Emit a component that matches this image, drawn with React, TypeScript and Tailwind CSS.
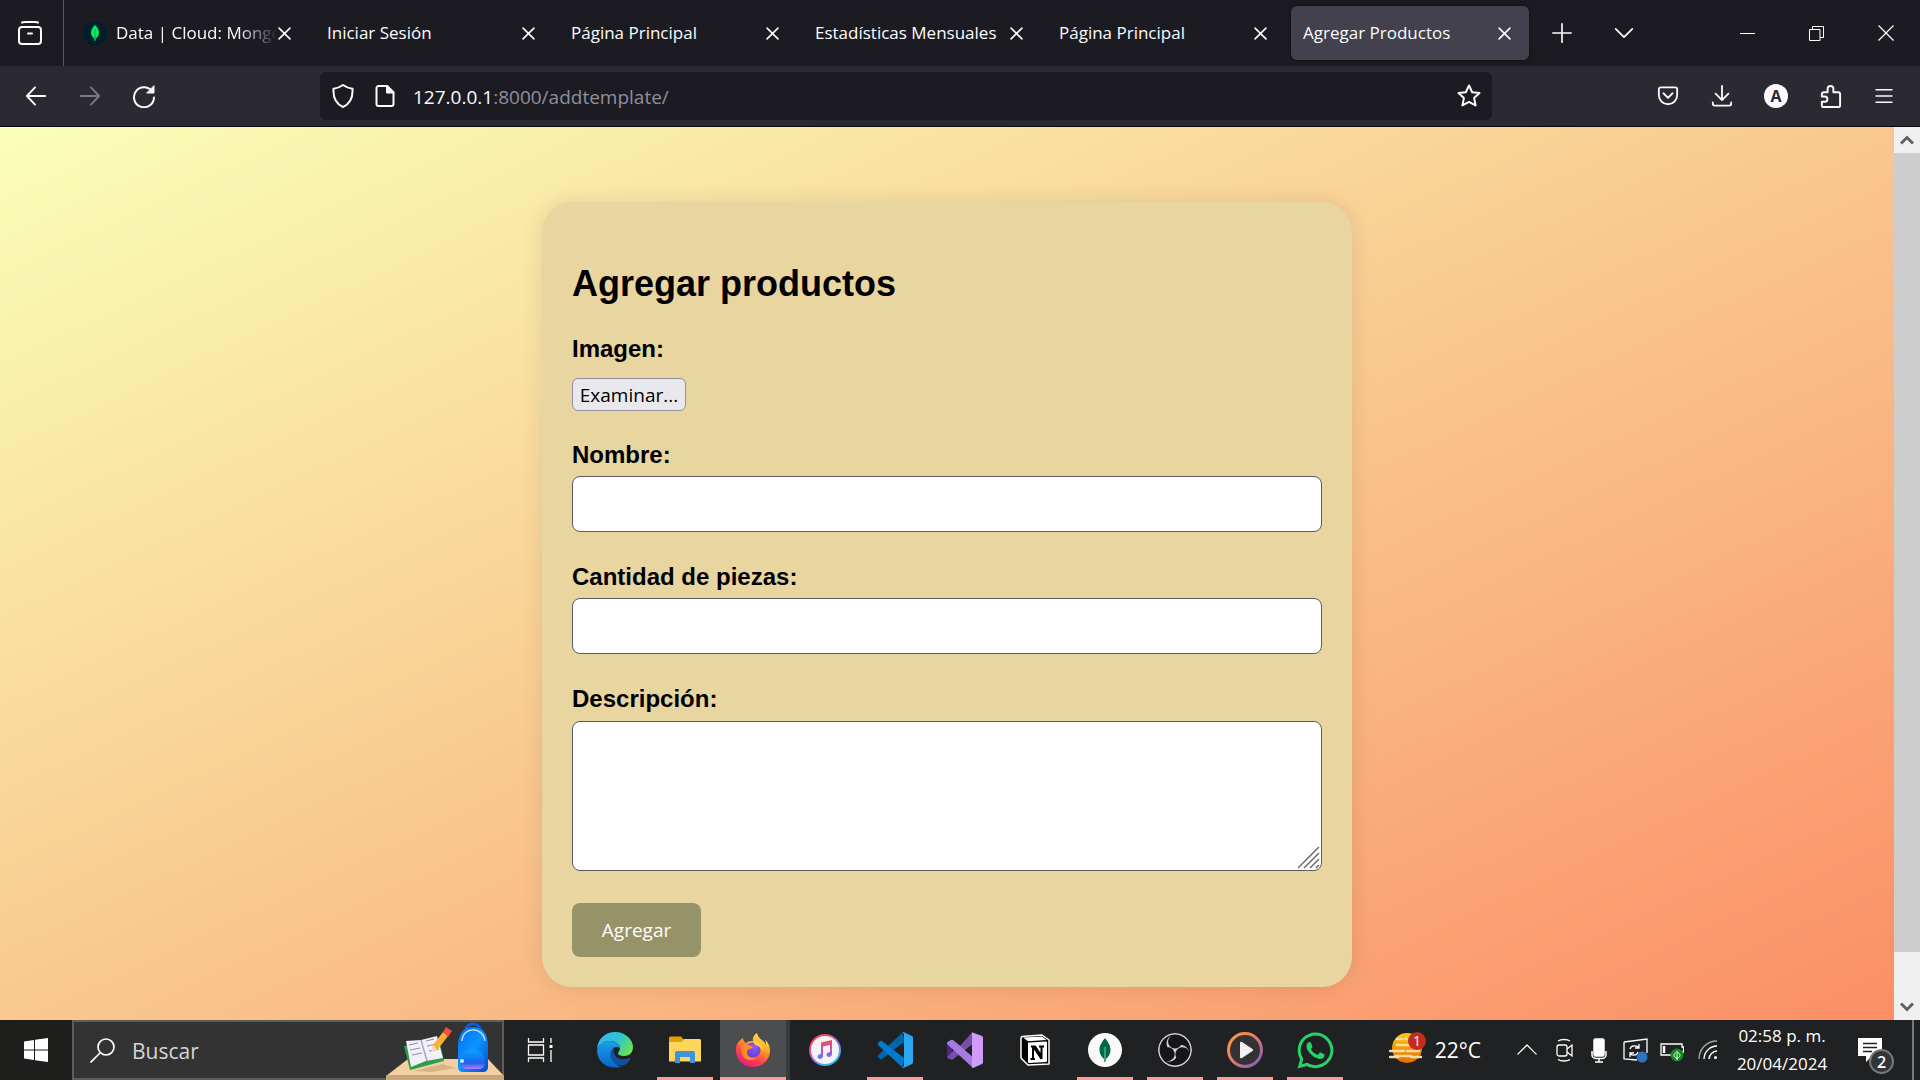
import { useRef } from 'react';
import type { ReactNode } from 'react';
import { FaWhatsapp } from 'react-icons/fa';
import { SiObsstudio } from 'react-icons/si';

const tabs = [
  { id: 1, title: 'Data | Cloud: Mongo', favicon: true },
  { id: 2, title: 'Iniciar Sesión' },
  { id: 3, title: 'Página Principal' },
  { id: 4, title: 'Estadísticas Mensuales' },
  { id: 5, title: 'Página Principal' },
  { id: 6, title: 'Agregar Productos', active: true },
];

function IconButton({ label, className = '', children }: { label: string; className?: string; children: ReactNode }) {
  return (
    <button type="button" aria-label={label} className={`flex shrink-0 items-center justify-center ${className}`}>
      {children}
    </button>
  );
}

function Line({ d, size = 24, width = 2, className = '' }: { d: string; size?: number; width?: number; className?: string }) {
  return (
    <svg
      width={size}
      height={size}
      viewBox="0 0 24 24"
      fill="none"
      stroke="currentColor"
      strokeWidth={width}
      strokeLinecap="round"
      strokeLinejoin="round"
      className={`shrink-0 ${className}`}
    >
      <path d={d} />
    </svg>
  );
}

function MongoLeaf() {
  return (
    <svg width="24" height="24" viewBox="0 0 24 24" className="mr-[9px] shrink-0">
      <circle cx="12" cy="12" r="12" fill="#001e2b" />
      <path d="M12 4c2.600 2.400 4 5 4 7.600 0 2.900-1.500 4.900-3.400 6.200L12.400 20h-.8l-.2-2.200C9.500 16.500 8 14.500 8 11.600 8 9 9.400 6.400 12 4z" fill="#00ed64" />
      <path d="M12 8v11" stroke="#00a848" strokeWidth="1" />
    </svg>
  );
}

function TabStrip() {
  return (
    <div className="flex h-[66px] shrink-0 items-stretch bg-[#1c1b22]">
      <IconButton label="Vista de Firefox" className="w-16 border-r border-[#5b5b66] pl-[17px] pr-5">
        <svg width="24" height="24" viewBox="0 0 24 24" fill="none" stroke="currentColor" strokeWidth="2" strokeLinecap="round" className="shrink-0">
          <rect x="1" y="6" width="22" height="17" rx="3" />
          <path d="M4 1.500c1-.5 2-.5 3-.5h10c1 0 2 0 3 .5M10 12.500h4" />
        </svg>
      </IconButton>
      <div className="flex min-w-0 items-center gap-1.5 pl-[7px]">
        {tabs.map((tab) => (
          <div
            key={tab.id}
            className={`flex h-[54px] w-[238px] min-w-0 items-center rounded-md pl-3 pr-[18px] ${
              tab.active ? 'bg-[#42414d] shadow-[0_0_4px_rgba(0,0,0,0.5)]' : ''
            }`}
          >
            {tab.favicon && <MongoLeaf />}
            <span
              className={`min-w-0 flex-1 overflow-hidden whitespace-nowrap ${
                tab.favicon ? '[mask-image:linear-gradient(to_left,transparent,black_40px)]' : ''
              }`}
            >
              {tab.title}
            </span>
            <IconButton label={`Cerrar ${tab.title}`} className="w-[13px]">
              <Line d="M2 2l20 20M22 2L2 22" size={13} width={3} />
            </IconButton>
          </div>
        ))}
      </div>
      <IconButton label="Nueva pestaña" className="w-[66px]">
        <Line d="M12 1v22M1 12h22" size={20} width={2} />
      </IconButton>
      <IconButton label="Listar pestañas" className="w-[57px]">
        <Line d="M2 7l10 10L22 7" size={20} width={2} />
      </IconButton>
      <div className="ml-auto flex">
        <IconButton label="Minimizar" className="w-[69px]">
          <span className="h-px w-[15px] bg-white" />
        </IconButton>
        <IconButton label="Restaurar" className="w-[69px]">
          <svg width="15" height="15" viewBox="0 0 15 15" fill="none" stroke="white">
            <path d="M.5 3.500h10.500v11H.5zM3.500 3.500v-3h11v11H11" />
          </svg>
        </IconButton>
        <IconButton label="Cerrar ventana" className="w-[69px]">
          <svg width="16" height="16" viewBox="0 0 16 16" stroke="white" strokeWidth="1.200">
            <path d="M.5.5l15 15M15.500.5l-15 15" />
          </svg>
        </IconButton>
      </div>
    </div>
  );
}

function Toolbar() {
  return (
    <div className="flex h-[61px] shrink-0 items-center border-b border-[#0c0c0d] bg-[#2b2a33]">
      <div className="flex pl-[9px]">
        <IconButton label="Atrás" className="w-[54px]">
          <Line d="M22 12H2M11 2.500L2 12l9 9.500" size={22} />
        </IconButton>
        <IconButton label="Adelante" className="w-[54px] text-[#7b7a82]">
          <Line d="M2 12h20M13 2.500l9 9.500-9 9.500" size={22} />
        </IconButton>
        <IconButton label="Recargar" className="w-[54px]">
          <svg width="24" height="24" viewBox="0 0 24 24" fill="none" stroke="currentColor" strokeWidth="2" strokeLinecap="round">
            <path d="M20.500 8A10 10 0 1 0 22 13.500" />
            <path d="M22 2v7h-7z" fill="currentColor" strokeWidth="1" strokeLinejoin="round" />
          </svg>
        </IconButton>
      </div>
      <div className="ml-[149px] flex h-12 min-w-0 max-w-[1172px] flex-1 items-center rounded-md bg-[#1c1b22] pl-[11px] pr-[11px]">
        <IconButton label="Protección contra rastreo" className="w-6">
          <Line d="M12 1c3 2.200 6 3.200 9.500 3.800C22 13 19 20 12 23 5 20 2 13 2.500 4.800 6 4.200 9 3.200 12 1z" size={24} />
        </IconButton>
        <IconButton label="Información del sitio" className="ml-[18px] w-6">
          <svg width="24" height="24" viewBox="0 0 24 24" fill="none" stroke="currentColor" strokeWidth="2" strokeLinejoin="round">
            <path d="M5.500 2H14l6.500 6.500V20a2 2 0 0 1-2 2h-13a2 2 0 0 1-2-2V4a2 2 0 0 1 2-2z" />
            <path d="M14 2l6.500 6.500H14z" fill="currentColor" />
          </svg>
        </IconButton>
        <div className="ml-4 min-w-0 flex-1 truncate pt-0.5 text-[19px] text-[#8f8f9d]">
          <span className="text-[#fbfbfe]">127.0.0.1</span>:8000/addtemplate/
        </div>
        <IconButton label="Marcar esta página" className="w-6">
          <Line d="M12 1.500l3.200 6.700 7.300.9-5.400 5 1.500 7.300L12 17.900l-6.600 3.500 1.500-7.300-5.400-5 7.300-.9z" size={24} />
        </IconButton>
      </div>
      <div className="ml-auto flex pr-[9px]">
        <IconButton label="Guardar en Pocket" className="w-[54px]">
          <Line d="M4 2.500h16a2 2 0 0 1 2 2V11a10 10 0 0 1-20 0V4.500a2 2 0 0 1 2-2zM7 9l5 5 5-5" size={22} />
        </IconButton>
        <IconButton label="Descargas" className="w-[54px]">
          <Line d="M12 1v15M5 9.500l7 7 7-7M2 19v1.500a2 2 0 0 0 2 2h16a2 2 0 0 0 2-2V19" size={22} />
        </IconButton>
        <IconButton label="Cuenta" className="w-[54px]">
          <span className="flex h-6 w-6 items-center justify-center rounded-full bg-[#fbfbfe] text-base font-bold leading-6 text-[#2b2a33]">A</span>
        </IconButton>
        <IconButton label="Extensiones" className="w-[54px]">
          <Line
            d="M3 12V9.500a2 2 0 0 1 2-2h4V4a3 3 0 0 1 6 0v3.500h5a2 2 0 0 1 2 2V21a2 2 0 0 1-2 2H5a2 2 0 0 1-2-2v-3.500h3A2.700 2.700 0 0 0 6 12z"
            size={23}
          />
        </IconButton>
        <IconButton label="Menú" className="w-[54px]">
          <Line d="M2.500 4.500h19M2.500 12h19M2.500 19.500h19" size={20} />
        </IconButton>
      </div>
    </div>
  );
}

const labelClass = 'block text-[24px] font-bold leading-7';
const fieldClass = 'block w-full rounded-lg border border-[#5b5b66] bg-white px-4 text-[20px] outline-none';

function ProductForm() {
  const fileInput = useRef<HTMLInputElement>(null);

  return (
    <form
      onSubmit={(e) => e.preventDefault()}
      className="w-[810px] max-w-full rounded-[30px] bg-[#e8d5a0] px-[30px] pb-[30px] pt-[61px] font-['Liberation_Sans',Arial,sans-serif] text-black shadow-[0_0_22px_rgba(0,0,0,0.1)]"
    >
      <h1 className="mb-[30px] text-[36px] font-bold leading-[42px]">Agregar productos</h1>
      <div className="mb-[30px]">
        <label htmlFor="imagen" className={`mb-[15px] ${labelClass}`}>
          Imagen:
        </label>
        <input ref={fileInput} id="imagen" type="file" hidden />
        <button
          type="button"
          onClick={() => fileInput.current?.click()}
          className="block h-[33px] w-[114px] rounded-md border border-[#8f8f9d] bg-[#e9e9ed] font-['Open_Sans',sans-serif] text-[19px] leading-[30px]"
        >
          Examinar...
        </button>
      </div>
      <div className="mb-[31px]">
        <label htmlFor="nombre" className={`mb-[7px] ${labelClass}`}>
          Nombre:
        </label>
        <input id="nombre" type="text" className={`h-14 ${fieldClass}`} />
      </div>
      <div className="mb-[31px]">
        <label htmlFor="cantidad" className={`mb-[7px] ${labelClass}`}>
          Cantidad de piezas:
        </label>
        <input id="cantidad" type="text" className={`h-14 ${fieldClass}`} />
      </div>
      <div className="mb-8">
        <label htmlFor="descripcion" className={`mb-2 ${labelClass}`}>
          Descripción:
        </label>
        <div className="relative">
          <textarea id="descripcion" className={`h-[150px] resize-none ${fieldClass}`} />
          <svg className="pointer-events-none absolute bottom-0.5 right-0.5" width="22" height="22" viewBox="0 0 22 22" stroke="#6b6b6b" strokeWidth="1.500">
            <path d="M0 21L21 0M6 21L21 6M12 21l9-9M18 21l3-3" />
          </svg>
        </div>
      </div>
      <button type="submit" className="block h-[54px] w-[129px] rounded-lg bg-[#979368] font-['Open_Sans',sans-serif] text-[19px] text-white">
        Agregar
      </button>
    </form>
  );
}

function Scrollbar() {
  return (
    <div className="flex w-[26px] shrink-0 flex-col bg-[#f0f0f0] text-[#606060]">
      <IconButton label="Subir" className="h-[26px]">
        <svg width="14" height="10" viewBox="0 0 14 10" fill="none" stroke="currentColor" strokeWidth="3">
          <path d="M1 8.500l6-6 6 6" />
        </svg>
      </IconButton>
      <div className="flex-1">
        <div className="h-[95%] bg-[#cdcdcd]" />
      </div>
      <IconButton label="Bajar" className="h-[26px]">
        <svg width="14" height="10" viewBox="0 0 14 10" fill="none" stroke="currentColor" strokeWidth="3">
          <path d="M1 1.500l6 6 6-6" />
        </svg>
      </IconButton>
    </div>
  );
}

function SearchArt() {
  return (
    <svg width="118" height="58" viewBox="0 0 118 58" className="-mb-0.5 -mr-0.5 ml-auto shrink-0 self-end">
      <defs>
        <linearGradient id="bag" x1="0" y1="0" x2="1" y2="1">
          <stop offset="0" stopColor="#0a6cf0" />
          <stop offset=".5" stopColor="#0a95ff" />
          <stop offset="1" stopColor="#0747c7" />
        </linearGradient>
        <linearGradient id="pocket" x1="0" y1="0" x2="0" y2="1">
          <stop offset="0" stopColor="#0aa5ff" />
          <stop offset=".7" stopColor="#1a62ea" />
          <stop offset="1" stopColor="#c07bff" />
        </linearGradient>
      </defs>
      <path d="M0 54l22-17h80l16 17z" fill="#f3cfa4" />
      <path d="M0 53h118v5H0z" fill="#c9a57c" />
      <path d="M28 49l28-7 14 4-24 4z" fill="#d9b387" />
      <path d="M18 24l6 24 34-9-5-22z" fill="#2f9e44" />
      <path d="M20 19l5 26 15-6 17-3-6-22-16 4z" fill="#f2f1fa" />
      <path d="M35 18l6 21" stroke="#a9a3c8" strokeWidth="1.500" />
      <path d="M23 23l9-2M24 28l10-2M26 33l10-2M40 19l8-2M41 24l9-2M43 29l10-2" stroke="#8d89a6" strokeWidth="1" />
      <path d="M45 30l2-7 10-13 5 4-10 13z" fill="#fbb034" />
      <path d="M57 10l3-5 6 4-4 6z" fill="#f0503c" />
      <path d="M45 30l2-7 4 4z" fill="#f8dcc0" />
      <path d="M80 8c0-8 14-8 14 0" fill="none" stroke="#0a5be0" strokeWidth="3" />
      <path d="M72 24C72 10 79 5 87 5s15 5 15 19v21c0 3-2 5-5 5H77c-3 0-5-2-5-5z" fill="url(#bag)" />
      <path d="M76 19c1-15 21-15 23 0" fill="none" stroke="#b9dcff" strokeWidth="1.500" />
      <path d="M75 40c0-17 24-17 24 0 0 5-3 7-6 7H81c-3 0-6-2-6-7z" fill="url(#pocket)" />
      <circle cx="76" cy="39" r="2" fill="#d3e8ff" />
    </svg>
  );
}

function EdgeIcon() {
  return (
    <svg width="36" height="36" viewBox="0 0 36 36">
      <defs>
        <linearGradient id="edgeTop" x1="0" y1=".2" x2="1" y2=".7">
          <stop offset="0" stopColor="#35b8ee" />
          <stop offset=".5" stopColor="#2cc3d2" />
          <stop offset="1" stopColor="#6de34e" />
        </linearGradient>
        <linearGradient id="edgeSide" x1="0" y1="0" x2="0" y2="1">
          <stop offset="0" stopColor="#1c9ee8" />
          <stop offset="1" stopColor="#0a66cc" />
        </linearGradient>
      </defs>
      <path d="M0 17C1 6 9 0 18 0c11 0 18 8 18 15 0 6-4 9-9 9-4 0-6-1-6-3 0-1 2-2 2-5 0-4-5-7-10-7C7 9 2 12 0 17z" fill="url(#edgeTop)" />
      <path d="M0 18c1-6 7-9 12-9 6 0 11 3 11 7-7-4-11 4-7 11 2 5 7 9 10 7-12 5-26-2-26-16z" fill="url(#edgeSide)" />
      <path d="M17 15c-5 4-5 13 2 17 6 3 11 1 14-4 1-2 0-2-1-2-6 3-14 1-15-6-.2-2 0-3 0-5z" fill="#1251a0" />
    </svg>
  );
}

function ExplorerIcon() {
  return (
    <svg width="32" height="28" viewBox="0 0 32 28">
      <path d="M0 2a1.500 1.500 0 0 1 1.500-1.500H12L15 4v4H0z" fill="#e3a008" />
      <path d="M0 6h13l2-3h15.500A1.500 1.500 0 0 1 32 4.500v21H0z" fill="#ffd65c" />
      <path d="M6 27V17a2 2 0 0 1 2-2h16a2 2 0 0 1 2 2v10h-5v-6H11v6z" fill="#3c94dc" />
    </svg>
  );
}

function FirefoxIcon() {
  return (
    <svg width="36" height="36" viewBox="0 0 36 36">
      <defs>
        <linearGradient id="fox" x1=".8" y1="0" x2=".25" y2="1">
          <stop offset="0" stopColor="#fff44f" />
          <stop offset=".35" stopColor="#ffa62b" />
          <stop offset=".65" stopColor="#ff4a45" />
          <stop offset="1" stopColor="#e31587" />
        </linearGradient>
        <radialGradient id="globe" cx=".6" cy=".3" r=".8">
          <stop offset="0" stopColor="#9059ff" />
          <stop offset="1" stopColor="#5b3bd0" />
        </radialGradient>
      </defs>
      <path d="M22 1c-3 2-5 5-4 8-3 0-5 0-7 2-2-1-3-3-3-5C3 9 0 14 1 20c1 9 8 15 17 15s17-7 17-16c0-5-2-9-5-11 1 2 1 3 1 5C29 8 23 7 22 1z" fill="url(#fox)" />
      <circle cx="18" cy="18" r="7.500" fill="url(#globe)" />
      <path d="M5 14c3-2 6-2 8-1 2 0 4 1 5 2-2 3-6 1-6 5 0 5 5 7 10 5-5 6-14 3-15-4-1-3 0-5-2-7z" fill="#ff8b22" />
      <path d="M18 9c6 0 11 4 10 11-1-4-4-6-8-7z" fill="#ffcf3e" />
    </svg>
  );
}

function MusicIcon() {
  return (
    <svg width="32" height="32" viewBox="0 0 32 32">
      <defs>
        <linearGradient id="ring" x1="0" y1="0" x2=".7" y2="1">
          <stop offset="0" stopColor="#ff4b6b" />
          <stop offset=".25" stopColor="#f0486d" />
          <stop offset=".6" stopColor="#9b6cf0" />
          <stop offset="1" stopColor="#28c3f5" />
        </linearGradient>
        <linearGradient id="note" x1="0" y1="0" x2="0" y2="1">
          <stop offset="0" stopColor="#f9495f" />
          <stop offset=".6" stopColor="#b458c8" />
          <stop offset="1" stopColor="#5b7cf7" />
        </linearGradient>
      </defs>
      <circle cx="16" cy="16" r="15" fill="#f5f5f8" stroke="url(#ring)" strokeWidth="2" />
      <path d="M12 8.500L23 6v14c0 2-1.500 3-3 3s-2.500-1-2.500-2.200c0-2 2-2.800 3.500-2.800v-7l-7 1.500V22c0 2-1.500 3-3 3s-2.500-1-2.500-2.200c0-2 2-2.600 3.500-2.800z" fill="url(#note)" />
    </svg>
  );
}

function VSCodeIcon() {
  return (
    <svg width="36" height="36" viewBox="0 0 36 36">
      <path d="M25.500.5L5 19.500 1 23.500a2 2 0 0 0 0 1.500l2 2a2 2 0 0 0 2 0L27 10z" fill="#0065a9" />
      <path d="M1 11l2-2a2 2 0 0 1 2 0l22 17-1.500 9.500L1 13a1.500 1.500 0 0 1 0-2z" fill="#007acc" />
      <path d="M25.500.3c.5-.3 1-.3 1.500 0L35 4c.7.400 1 .9 1 1.500v25c0 .6-.3 1.100-1 1.500l-8 3.700c-.5.3-1 .3-1.500 0-.8-.5 1.500.300 1.500-2.700V3C27 0 24.700.8 25.500.3z" fill="#2ba7f0" />
    </svg>
  );
}

function VisualStudioIcon() {
  return (
    <svg width="36" height="36" viewBox="0 0 36 36">
      <path d="M0 10l5-2v20l-5-2z" fill="#52218a" />
      <path d="M0 10.500L5 8l8 6 12-13.500L27 11 5 28l-5-2.500 7-7.500z" fill="#7450aa" />
      <path d="M0 10.500L4 8c1-.5 2 0 3 .8L27 26l-1.500 9.500L0 12z" fill="#a67be0" />
      <path d="M25 .3L35 4c.7.400 1 .9 1 1.500v25c0 .6-.3 1.100-1 1.500l-9 4c-1 0-1-1-1-2z" fill="#cf9cf9" />
    </svg>
  );
}

function NotionIcon() {
  return (
    <svg width="30" height="32" viewBox="0 0 30 32">
      <path d="M2 2.500L22 1l7 5v24L8 31l-7-7V4z" fill="#000" stroke="#fff" strokeWidth="1.500" strokeLinejoin="round" />
      <path d="M3 3.500L22 2.500l4.500 3.500L8 7.200z" fill="#fff" />
      <path d="M8 9.500a1 1 0 0 1 1-1l17-1a1 1 0 0 1 1 1V27a1 1 0 0 1-1 1L9 29a1 1 0 0 1-1-1z" fill="#fff" />
      <path d="M11 12.500h4l6.500 9.500v-9.500M13 12.500V25M10.500 25H15M19 12.500h5M21.500 22v3M13.500 13l8 12" fill="none" stroke="#000" strokeWidth="2" />
    </svg>
  );
}

function CompassIcon() {
  return (
    <svg width="34" height="34" viewBox="0 0 34 34">
      <circle cx="17" cy="17" r="17" fill="#fafafa" />
      <path d="M17 5c3 4 5.500 7 5.500 12 0 4-2 7-4.500 9l-.5 3h-1l-.5-3c-2.500-2-4.500-5-4.500-9C11.500 12 14 9 17 5z" fill="#00684a" />
      <path d="M17 14v14" stroke="#4fae8b" strokeWidth="1.500" />
    </svg>
  );
}

function PlayerIcon() {
  return (
    <svg width="36" height="36" viewBox="0 0 36 36">
      <defs>
        <linearGradient id="player" x1="0" y1="0" x2="1" y2="1">
          <stop offset="0" stopColor="#ff9d3c" />
          <stop offset=".4" stopColor="#e88062" />
          <stop offset="1" stopColor="#7d56c9" />
        </linearGradient>
      </defs>
      <circle cx="18" cy="18" r="16.500" fill="#333" stroke="url(#player)" strokeWidth="3" />
      <path d="M13 11c0-1 1-1.500 2-1l10.500 7c.8.500.8 1.500 0 2L15 26c-1 .6-2 0-2-1z" fill="#f1f1f1" />
    </svg>
  );
}

const apps = [
  { name: 'Microsoft Edge', icon: <EdgeIcon /> },
  { name: 'Explorador de archivos', icon: <ExplorerIcon />, open: true },
  { name: 'Firefox', icon: <FirefoxIcon />, open: true, active: true },
  { name: 'iTunes', icon: <MusicIcon /> },
  { name: 'Visual Studio Code', icon: <VSCodeIcon />, open: true },
  { name: 'Visual Studio', icon: <VisualStudioIcon /> },
  { name: 'Notion', icon: <NotionIcon /> },
  { name: 'MongoDB Compass', icon: <CompassIcon />, open: true },
  {
    name: 'OBS Studio',
    icon: <SiObsstudio size={34} className="rounded-full bg-[#17151a] text-[#d4d4d6]" />,
    open: true,
  },
  { name: 'Reproductor multimedia', icon: <PlayerIcon />, open: true },
  { name: 'WhatsApp', icon: <FaWhatsapp size={41} color="#25d366" />, open: true },
];

function Tray() {
  return (
    <div className="ml-auto flex items-center text-white">
      <button type="button" className="flex items-center gap-[9px] text-[21px]">
        <svg width="37" height="32" viewBox="0 0 37 32" className="mb-1">
          <defs>
            <linearGradient id="sun" x1="0" y1="0" x2="0" y2="1">
              <stop offset="0" stopColor="#ffc90a" />
              <stop offset="1" stopColor="#e86a00" />
            </linearGradient>
          </defs>
          <circle cx="18" cy="16" r="15" fill="url(#sun)" />
          <path d="M8 7h5M16 7h4M8 13h13M1 19h14M18 19h12M6 24h16M1 25h8M22 25h10" stroke="#f2dca6" strokeWidth="2.500" strokeLinecap="round" />
          <circle cx="28" cy="9" r="9" fill="#c42b1c" />
          <text x="28" y="14" textAnchor="middle" fill="#fff" fontSize="14" fontFamily="Open Sans, sans-serif">
            1
          </text>
        </svg>
        <span className="pt-0.5">22°C</span>
      </button>
      <IconButton label="Mostrar iconos ocultos" className="ml-9 w-5">
        <Line d="M1 17L12 6l11 11" size={20} width={1.5} />
      </IconButton>
      <IconButton label="Reunirse ahora" className="ml-[19px] w-[18px]">
        <svg width="18" height="24" viewBox="0 0 18 24" fill="none" stroke="currentColor" strokeWidth="1.300">
          <rect x="1" y="7" width="10" height="11" rx="2" />
          <path d="M11 11l5-4v11l-5-4M2 3c3-2 9-2 12 0M2 21.500c3 2 9 2 12 0" />
        </svg>
      </IconButton>
      <IconButton label="Micrófono" className="ml-[17px] w-4">
        <svg width="16" height="25" viewBox="0 0 16 25" fill="none" stroke="currentColor" strokeWidth="1.500">
          <rect x="3" y="1" width="10" height="17" rx="1.500" fill="currentColor" />
          <path d="M1 13v4c0 2 2 3.500 4 3.500h6c2 0 4-1.500 4-3.500v-4M8 20v4M4 24h8" />
        </svg>
      </IconButton>
      <IconButton label="Actualizaciones" className="ml-4 w-[25px]">
        <svg width="25" height="25" viewBox="0 0 25 25" fill="none" stroke="currentColor" strokeWidth="1.300">
          <path d="M1 4l23-3v14M14 22L1 21V4" />
          <path d="M7 11c1-4 7-4 9-1M16 6v4h-4M15 14c-1 4-7 4-8 1M7 19v-4h4" />
          <circle cx="19" cy="19" r="5.500" fill="#2f72bd" stroke="none" />
        </svg>
      </IconButton>
      <IconButton label="Batería" className="ml-3 w-6">
        <svg width="24" height="20" viewBox="0 0 24 20" fill="none" stroke="currentColor" strokeWidth="1.300" className="mt-1">
          <path d="M1 2h21v3h1.500v5H22v3H1z" />
          <path d="M4 4v7" strokeWidth="2.500" />
          <circle cx="17" cy="13" r="6.500" fill="#0f8a1f" stroke="none" />
          <path d="M17 9.500c4 3 4 5 0 7-4-2-4-4 0-7zM17 11v7" strokeWidth="1" />
        </svg>
      </IconButton>
      <IconButton label="Red" className="ml-3.5 w-5">
        <svg width="20" height="20" viewBox="0 0 20 20" fill="none" stroke="currentColor" strokeWidth="1.400">
          <path d="M1 19C1 9 9 1 19 1" opacity=".6" />
          <path d="M6 19c0-7 6-13 13-13M11 19c0-4 4-8 8-8" />
          <circle cx="17.500" cy="17.500" r="1.500" fill="currentColor" stroke="none" />
        </svg>
      </IconButton>
      <button type="button" className="ml-4 w-[96px] text-center text-[17px] leading-7">
        02:58 p. m.
        <br />
        20/04/2024
      </button>
      <button type="button" aria-label="Notificaciones, 2 nuevas" className="relative ml-7 mt-3 h-9 w-9">
        <svg width="25" height="36" viewBox="0 0 25 36">
          <path d="M0 0h24v18H14l-6 6v-6H0z" fill="#fff" />
          <path d="M5 5.500h14M5 9.500h14M5 13.500h9" stroke="#202122" strokeWidth="1.500" />
        </svg>
        <span className="absolute bottom-0 right-0 flex h-[25px] w-[25px] items-center justify-center rounded-full border-2 border-[#77787a] bg-[#333435] text-base font-semibold">
          2
        </span>
      </button>
      <span className="ml-[18px] mr-1.5 h-[60px] w-0.5 bg-[#77787a]" />
    </div>
  );
}

function Taskbar() {
  return (
    <div className="flex h-[60px] shrink-0 bg-[#1f2122]">
      <IconButton label="Inicio" className="w-[72px] bg-[#1e1e1c]">
        <svg width="24" height="24" viewBox="0 0 24 24" fill="#fff">
          <path d="M0 3.500L10 2v9.500H0zM11 1.800L24 0v11.500H11zM0 12.500h10V22L0 20.500zM11 12.500h13V24l-13-1.800z" />
        </svg>
      </IconButton>
      <div className="flex w-[432px] items-center border-2 border-[#5d5d5d] bg-[#333] pl-4">
        <svg width="25" height="25" viewBox="0 0 25 25" fill="none" stroke="#fff" strokeWidth="1.700" className="shrink-0">
          <circle cx="16" cy="9" r="8" />
          <path d="M10 15L.5 24.500" />
        </svg>
        <input
          type="text"
          aria-label="Buscar"
          placeholder="Buscar"
          className="ml-[17px] min-w-0 flex-1 bg-transparent pt-1 text-[21px] outline-none placeholder:text-[#d6d6d6]"
        />
        <SearchArt />
      </div>
      <IconButton label="Vista de tareas" className="w-[76px] pr-1">
        <svg width="26" height="24" viewBox="0 0 26 24" fill="none" stroke="#fff" strokeWidth="1.300">
          <path d="M1.500 0v4h15V0M1.500 24v-4h15v4M1.500 7h15v10h-15zM24 0v5M24 12v12" />
          <path d="M22.500 7h3v3h-3z" fill="#fff" stroke="none" />
        </svg>
      </IconButton>
      {apps.map((app) => (
        <button
          key={app.name}
          type="button"
          aria-label={app.name}
          className={`relative flex w-[70px] shrink-0 items-center justify-center ${
            app.active ? 'border-r-4 border-[#37393a] bg-[#4c4d4e]' : ''
          }`}
        >
          {app.icon}
          {app.open && <span className={`absolute bottom-0 h-[3px] bg-[#ff99a0] ${app.active ? 'inset-x-0' : 'inset-x-[7px]'}`} />}
        </button>
      ))}
      <Tray />
    </div>
  );
}

export default function App() {
  return (
    <div className="flex h-screen flex-col overflow-hidden font-['Open_Sans','Segoe_UI',sans-serif] text-[17px] text-[#fbfbfe]">
      <TabStrip />
      <Toolbar />
      <div className="flex min-h-0 flex-1">
        <main className="flex min-w-0 flex-1 items-start justify-center overflow-hidden bg-[linear-gradient(to_bottom_right,#f9ffb9,#f9c68d_52%,#fb8e65)] pt-[75px]">
          <ProductForm />
        </main>
        <Scrollbar />
      </div>
      <Taskbar />
    </div>
  );
}
